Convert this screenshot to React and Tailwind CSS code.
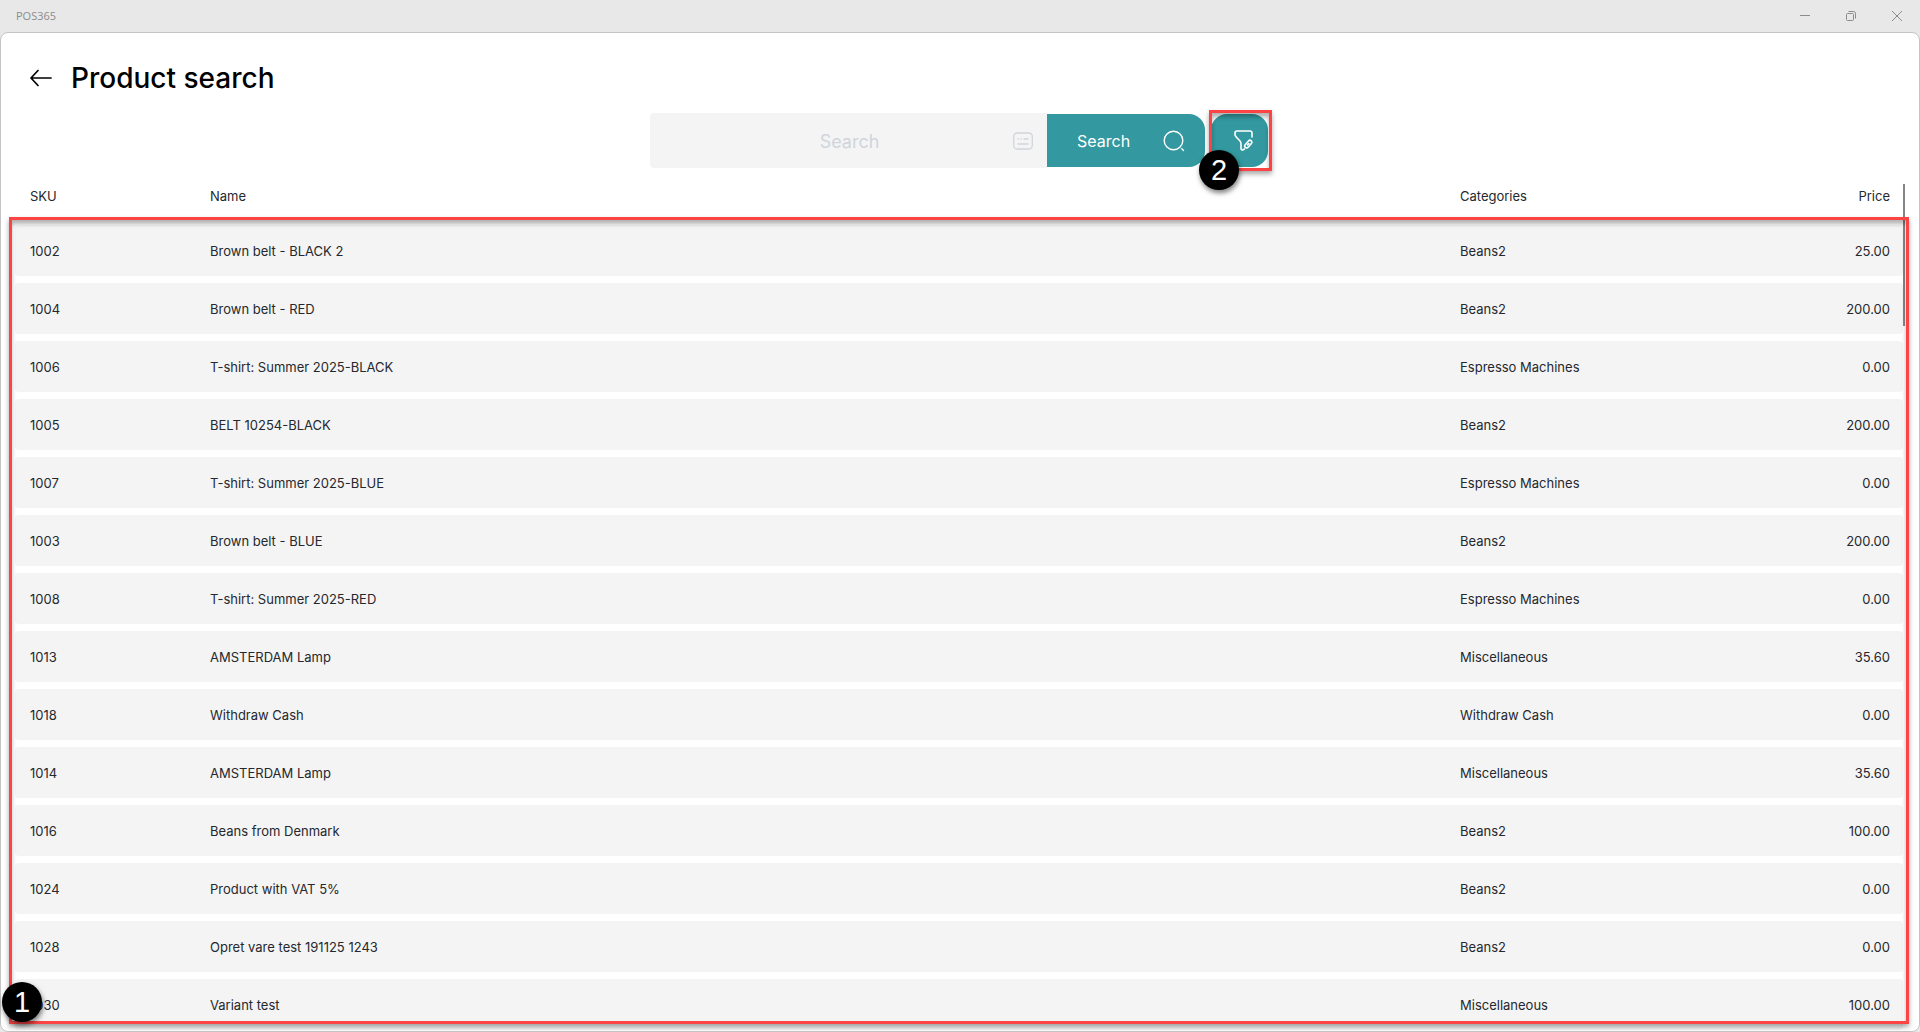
import { useState } from "react";

const products = [
  { sku: "1002", name: "Brown belt - BLACK 2", category: "Beans2", price: 25 },
  { sku: "1004", name: "Brown belt - RED", category: "Beans2", price: 200 },
  { sku: "1006", name: "T-shirt: Summer 2025-BLACK", category: "Espresso Machines", price: 0 },
  { sku: "1005", name: "BELT 10254-BLACK", category: "Beans2", price: 200 },
  { sku: "1007", name: "T-shirt: Summer 2025-BLUE", category: "Espresso Machines", price: 0 },
  { sku: "1003", name: "Brown belt - BLUE", category: "Beans2", price: 200 },
  { sku: "1008", name: "T-shirt: Summer 2025-RED", category: "Espresso Machines", price: 0 },
  { sku: "1013", name: "AMSTERDAM Lamp", category: "Miscellaneous", price: 35.6 },
  { sku: "1018", name: "Withdraw Cash", category: "Withdraw Cash", price: 0 },
  { sku: "1014", name: "AMSTERDAM Lamp", category: "Miscellaneous", price: 35.6 },
  { sku: "1016", name: "Beans from Denmark", category: "Beans2", price: 100 },
  { sku: "1024", name: "Product with VAT 5%", category: "Beans2", price: 0 },
  { sku: "1028", name: "Opret vare test 191125 1243", category: "Beans2", price: 0 },
  { sku: "1030", name: "Variant test", category: "Miscellaneous", price: 100 },
];

export default function App() {
  return (
    <div className="flex h-screen flex-col overflow-hidden bg-[#e8e8e8] font-['Inter',sans-serif] text-[#25282e]">
      <TitleBar />
      <main className="relative flex min-h-0 flex-1 flex-col rounded-lg border border-[#c4c4c4] bg-white">
        <header className="flex items-center gap-[18px] px-7 pt-[25px]">
          <button aria-label="Back" className="text-black">
            <BackIcon />
          </button>
          <h1 className="text-[28px] leading-10 font-medium text-black">Product search</h1>
        </header>
        <SearchBar />
        <ProductTable />
        {/* scroll thumb and callouts float over the table */}
        <div className="absolute top-[151px] right-3.5 h-[142px] w-0.5 bg-[#858585]" />
        <div className="pointer-events-none absolute top-[184px] right-2.5 bottom-[7px] left-2 border-3 border-[#fd4444] shadow-[0_3px_5px_rgba(0,0,0,0.35),inset_0_4px_4px_rgba(0,0,0,0.3)]" />
        <Callout className="bottom-[9px] left-px">1</Callout>
      </main>
    </div>
  );
}

function TitleBar() {
  return (
    <div className="flex h-8 shrink-0 items-center justify-between pr-[18px] pl-4 text-[#8c8c8c]">
      <span className="font-['Open_Sans',sans-serif] text-[11px]">POS365</span>
      <div className="flex gap-9">
        <button aria-label="Minimize">
          <svg width="10" height="10" viewBox="0 0 10 10" stroke="currentColor">
            <path d="M0 4.5h10" />
          </svg>
        </button>
        <button aria-label="Restore">
          <svg width="10" height="10" viewBox="0 0 10 10" fill="none" stroke="currentColor">
            <rect x="0.5" y="2.5" width="7" height="7" rx="1" />
            <path d="M2.5 0.5h5a2 2 0 0 1 2 2v5" />
          </svg>
        </button>
        <button aria-label="Close">
          <svg width="10" height="10" viewBox="0 0 10 10" stroke="currentColor">
            <path d="M0 0l10 10M10 0L0 10" />
          </svg>
        </button>
      </div>
    </div>
  );
}

function SearchBar() {
  const [query, setQuery] = useState("");

  return (
    <form className="mt-[15px] flex items-center justify-center pr-0.5" onSubmit={(e) => e.preventDefault()}>
      <div className="flex h-[55px] w-[397px] items-center rounded-l bg-[#f4f4f4] pr-3.5">
        <input
          aria-label="Search products"
          value={query}
          onChange={(e) => setQuery(e.target.value)}
          placeholder="Search"
          className="min-w-0 flex-1 bg-transparent pt-0.5 pl-9 text-center text-lg outline-none placeholder:text-[#d0d5dc]"
        />
        <button type="button" aria-label="Keyboard" className="text-[#d0d5dc]">
          <KeyboardIcon />
        </button>
      </div>
      <button
        type="submit"
        className="flex h-[53px] w-[158px] items-center justify-between rounded-r-2xl bg-[#33989f] pr-5 pl-[30px] text-base text-white"
      >
        Search
        <SearchIcon />
      </button>
      <div className="relative ml-1">
        <button
          type="button"
          aria-label="Filter"
          className="ml-0.5 flex h-[53px] w-[57px] items-center justify-center rounded-2xl bg-[#33989f] pl-2 text-white"
        >
          <FilterIcon />
        </button>
        <div className="pointer-events-none absolute -inset-y-1 left-0 -right-1 border-3 border-[#fd4444] shadow-[0_3px_5px_rgba(0,0,0,0.35),inset_0_4px_4px_rgba(0,0,0,0.3)]" />
        <Callout className="-bottom-[23px] -left-2.5">2</Callout>
      </div>
    </form>
  );
}

function ProductTable() {
  return (
    <div className="mt-px min-h-0 flex-1 overflow-hidden pr-4 pl-3.5">
      <table className="w-full table-fixed border-separate border-spacing-y-[7px] text-[13px] leading-5">
        <thead>
          <tr className="text-left">
            <th className="h-[42px] w-[195px] pb-[3px] pl-[15px] font-normal">SKU</th>
            <th className="pb-[3px] font-normal">Name</th>
            <th className="w-[300px] pb-[3px] font-normal">Categories</th>
            <th className="w-[143px] pr-[13px] pb-[3px] text-right font-normal">Price</th>
          </tr>
        </thead>
        <tbody>
          {products.map((p) => (
            <tr key={p.sku} className="bg-[#f4f4f4]">
              <td className="h-[51px] rounded-l pl-[15px]">{p.sku}</td>
              <td>{p.name}</td>
              <td>{p.category}</td>
              <td className="rounded-r pr-[13px] text-right">{p.price.toFixed(2)}</td>
            </tr>
          ))}
        </tbody>
      </table>
    </div>
  );
}

function Callout({ className, children }) {
  return (
    <span
      className={`absolute flex size-10 items-center justify-center rounded-full bg-black font-['Liberation_Sans',sans-serif] text-[29px] leading-none text-white shadow-[1px_3px_5px_rgba(0,0,0,0.5)] ${className}`}
    >
      {children}
    </span>
  );
}

function BackIcon() {
  return (
    <svg width="24" height="24" viewBox="0 0 24 24" fill="none" stroke="currentColor" strokeWidth="1.7" strokeLinecap="round" strokeLinejoin="round">
      <path d="M22 12H2M9 4.5L2 12l7 7.5" />
    </svg>
  );
}

function KeyboardIcon() {
  return (
    <svg width="20" height="18" viewBox="0 0 20 18" fill="none" stroke="currentColor" strokeWidth="1.3" strokeLinecap="round">
      <rect x="0.7" y="1" width="18.6" height="16" rx="3.5" />
      <path d="M5 7h.5M8 7h.5M11 7h4M5 12h10" />
    </svg>
  );
}

function SearchIcon() {
  return (
    <svg width="22" height="22" viewBox="0 0 22 22" fill="none" stroke="currentColor" strokeWidth="1.4" strokeLinecap="round">
      <circle cx="10.5" cy="10.5" r="9.3" />
      <path d="M18.8 18.8l1.7 1.7" />
    </svg>
  );
}

function FilterIcon() {
  return (
    <svg width="20" height="22" viewBox="0 0 20 22" fill="none" stroke="currentColor" strokeWidth="1.6" strokeLinecap="round" strokeLinejoin="round">
      <path d="M18 7V3a2 2 0 0 0-2-2H3a2 2 0 0 0-2 2v1.500a3 3 0 0 0 1 2.200l4 4.300a4 4 0 0 1 1 2.500V18.500a1.500 1.500 0 0 0 2.200 1.300L10.500 19" />
      <path d="M11.200 14.700l3.300-3.700a1.900 1.900 0 0 1 2.900 2.500l-3.300 3.700a1.900 1.900 0 0 1-2.900-2.500zM13.700 14.800l1.200-1.300" />
    </svg>
  );
}
